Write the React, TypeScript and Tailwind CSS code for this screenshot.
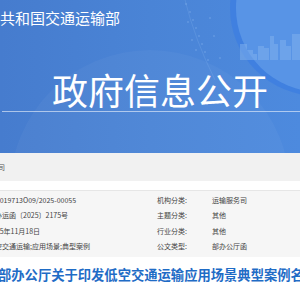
import React from "react";

/** 信息公开页头部 + 元数据表 */
const META_ROWS = [
  { left: "000019713O09/2025-00055", label: "机构分类:", value: "运输服务司" },
  { left: "交办运函〔2025〕2175号", label: "主题分类:", value: "其他" },
  { left: "2025年11月18日", label: "行业分类:", value: "其他" },
  { left: "低空交通运输;应用场景;典型案例", label: "公文类型:", value: "部办公厅函" },
];

function BannerArt() {
  // 右侧圆形 + 城市剪影 + 点状弧线
  const dots = [
    [186, 4], [190, 12], [193, 20], [196, 28], [199, 36], [202, 44], [205, 52],
    [188, 22], [192, 40], [210, 18], [214, 36], [220, 58], [196, 50], [208, 60],
  ];
  return (
    <svg className="absolute inset-0" width="300" height="153" viewBox="0 0 300 153">
      <circle cx="150" cy="190" r="140" fill="#ffffff" opacity="0.035" />
      <circle cx="318" cy="8" r="88" fill="#3f7fe0" opacity="0.9" />
      <circle cx="320" cy="8" r="84" fill="#5894e6" />
      <g fill="#7fb0ee" opacity="0.55">
        <rect x="240" y="44" width="7" height="16" />
        <rect x="247" y="50" width="6" height="10" />
        <rect x="253" y="54" width="4" height="6" />
        <rect x="258" y="46" width="6" height="14" />
        <rect x="264" y="48" width="5" height="12" />
        <rect x="270" y="36" width="4" height="24" />
        <rect x="274" y="44" width="4" height="16" />
        <rect x="280" y="40" width="6" height="20" />
        <rect x="286" y="46" width="5" height="14" />
        <rect x="292" y="34" width="8" height="26" />
      </g>
      <g fill="#9cc3f4" opacity="0.5">
        {dots.map(([x, y], i) => (
          <circle key={i} cx={x} cy={y} r="0.8" />
        ))}
      </g>
      <path d="M185 0 Q195 40 215 80" stroke="#8fbaf2" strokeWidth="0.6" fill="none" opacity="0.35" />
    </svg>
  );
}

export default function App() {
  return (
    <div
      className="w-[300px] h-[300px] overflow-hidden bg-white"
      style={{ fontFamily: '"Noto Sans CJK SC", "Noto Sans", sans-serif' }}
    >
      {/* 顶部横幅 */}
      <header className="relative h-[153px] overflow-hidden bg-gradient-to-r from-[#467cce] via-[#4a84d6] to-[#4d8ade]">
        <BannerArt />
        <div className="relative pt-[10px] text-[15px] leading-[15px] text-white whitespace-nowrap">
          共和国交通运输部
        </div>
        <div className="relative mt-[46px] ml-[52px] text-[36px] leading-[36px] text-white whitespace-nowrap">
          政府信息公开
        </div>
        <div className="relative mt-[4px] ml-[2px] h-px bg-white/55" />
      </header>

      {/* 灰条 */}
      <div className="h-[28px] bg-[#f1f1f1] flex items-center">
        <span className="ml-[-30px] text-[7px] text-[#555] whitespace-nowrap">运输服务司</span>
      </div>

      <div className="h-[9px]" />

      {/* 元数据 */}
      <div className="h-[67px] bg-[#f6f6f6] border-t border-[#e6e6e6] pt-[1px]">
        {META_ROWS.map((r) => (
          <div key={r.label} className="flex h-[15.5px] items-center text-[7px] text-[#444] whitespace-nowrap">
            <span className="w-[169px] ml-[-12px] shrink-0">{r.left}</span>
            <span className="w-[55px] shrink-0">{r.label}</span>
            <span>{r.value}</span>
          </div>
        ))}
      </div>

      {/* 标题 */}
      <h1 className="mt-[9px] ml-[-2px] text-[13.3px] leading-[18px] font-bold text-[#1f6cc6] whitespace-nowrap">
        部办公厅关于印发低空交通运输应用场景典型案例名单的通知
      </h1>
    </div>
  );
}
